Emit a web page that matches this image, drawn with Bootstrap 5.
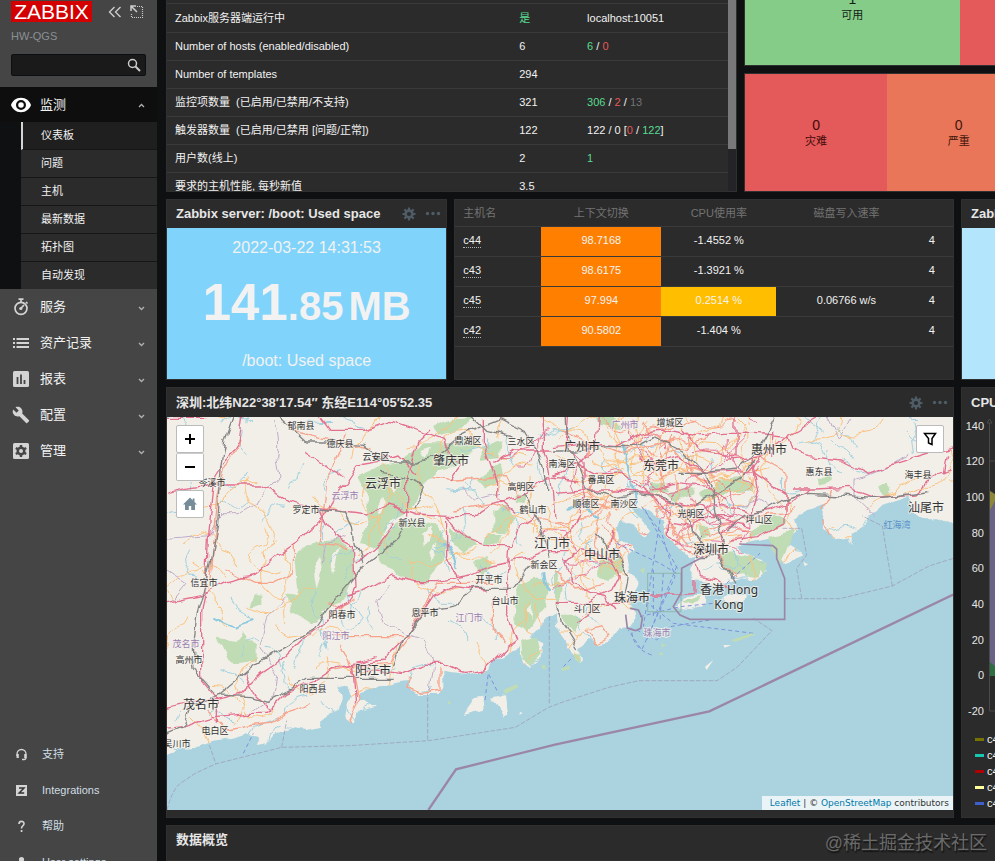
<!DOCTYPE html>
<html lang="zh-CN">
<head>
<meta charset="utf-8">
<meta name="viewport" content="width=device-width, initial-scale=1">
<title>Zabbix 仪表板</title>
<link href="https://cdn.jsdelivr.net/npm/bootstrap@5.3.0/dist/css/bootstrap.min.css" rel="stylesheet">
<style>
:root{--page:#0e1012;--panel:#2b2b2b;--line:#3a3a3a;--side:#454545;--ok:#59db8f;--bad:#e45959}
body{background:var(--page);color:#f2f2f2;font:11px/14px "Liberation Sans","Noto Sans CJK SC",sans-serif;height:100vh;overflow:hidden}
.sidebar{width:157px;background:var(--side)}
.brand-row{padding:1px 0 0 11px}
.brand-logo{background:#d40000;color:#fff;font:21px/21px "Liberation Sans",sans-serif;padding:0 1px;text-decoration:none;width:81px;height:21px;text-align:center}
.icon-btn{background:none;border:0;padding:0;line-height:0;color:#ccc}
.server-name{color:#8a9195;padding-left:11px;margin-top:7px}
.search-box{height:22px;margin:11px 11px;background:#1a1a1a;border:1px solid #0b0f12;border-radius:2px}
.search-box input{background:none;border:0;outline:0;color:#f2f2f2;min-width:0}
.menu-link{display:flex;align-items:center;height:36px;padding:0 10px 0 12px;color:#f2f2f2;text-decoration:none;font-size:13px;gap:10px}
.menu-link .glyph{width:18px;height:18px;color:#d4d4d4}
.menu-link .chev{width:11px;height:7px;margin-left:auto;color:#b0b0b0}
.menu-link.open{background:#0e0e0e;height:35px;padding-left:11px;gap:9px}
.menu-link.open .glyph{width:20px;height:20px}
.submenu{background:var(--page);padding-left:21px}
.submenu a{display:block;height:28px;line-height:27px;padding-left:20px;background:var(--panel);border-bottom:1px solid #141618;color:#f2f2f2;text-decoration:none}
.submenu a.current{background:#1f1f1f;border-left:2px solid #d4d4d4;padding-left:18px}
.submenu a:last-child{height:27px;border-bottom:0}
.foot-menu{margin-bottom:-19px}
.foot-menu a{display:flex;align-items:center;height:36px;padding-left:15px;gap:14px;color:#cfdde4;text-decoration:none}
.foot-menu svg{width:13px;height:13px;color:#d4d4d4}
.board{padding-left:9px;gap:7px}
.band{gap:7px}
.panel{background:var(--panel);border:1px solid #303030;min-width:0;overflow:hidden}
.cut{border-right:0}
.band-a{height:192px}.band-b{height:181px}.band-c{height:431px}
.side-tiles{gap:7px;flex:251 1 0;min-width:0;overflow:hidden}
.side-tiles .panel{height:119px;flex:none}
.w571{flex:568 1 0}.w282{flex:280 1 0}.w499{flex:499 1 0}.w34{flex:0 0 34px}
.panel-head{height:28px;padding:0 5px 0 9px;flex:none}
.band-c .panel-head{height:29px}
.panel-head h4{font-size:13px;line-height:16px;font-weight:700;color:#e6e6e6;margin:0;white-space:nowrap}
.panel-head svg{width:16px;height:16px;color:#4f5c66}
.grid-table{width:100%;border-collapse:collapse;table-layout:fixed}
.grid-table td{height:28px;padding:0 0 0 8px;border-bottom:1px solid var(--line);white-space:nowrap}
.top-rule{height:4px;border-bottom:1px solid var(--line)}
.hosts td{height:30px;text-align:center;padding:0 0 2px}
.hosts th{height:26px;padding:0;text-align:center;font-weight:400;color:#737373;border-bottom:1px solid var(--line)}
.hosts td:first-child,.hosts th:first-child{text-align:left;padding-left:8px}
.hosts td:last-child{padding-right:6px}
.hosts a{color:#f2f2f2;text-decoration:none;border-bottom:1px dotted #b0b0b0;padding-bottom:1px}
.hot{background:#ff8000}.warm{background:#ffbf00}
.rail{width:8px;background:#242428}.thumb{height:149px;background:#78787a}
.ok{color:var(--ok)}.bad{color:var(--bad)}.dim{color:#737373}
.tile{font-size:11px;line-height:16px}
.tile b{font-size:14px;font-weight:400}
.t-green{background:#86cc89;color:#121f13;flex:0 0 86%}
.t-red{background:#e45959;color:#400a0a}.t-orange{background:#e97659;color:#44150a}
.w57{flex:0 0 57%}
.item-tile{background:#80d4fb;color:#f2f2f2;padding:10px 0 8px}
.item-tile p{font-size:16px;line-height:20px;margin:0}
.big-num{font-weight:700;font-size:40px;line-height:56px;white-space:nowrap}
.big-num span{font-size:51px}
.big-num small{font-size:40px;font-weight:700;margin-left:5px}
.map-area{flex:none;height:393px;background:#aad3df}
.map-area>svg{width:100%;height:100%}
.map-tools{left:9px;top:8px;gap:9px}
.map-btn{width:28px;height:28px;background:#fff;border:1px solid #bbb;padding:0;color:#000;display:flex;align-items:center;justify-content:center;border-radius:2px}
.map-btn+.map-btn{border-top-color:#ccc}
.map-filter{right:9px;top:8px}
.credit{right:0;bottom:0;background:rgba(255,255,255,.75);color:#333;padding:0 4px 0 8px;font:9px/14px "DejaVu Sans",sans-serif}
.credit a{color:#0078a8;text-decoration:none}
.lb{font-family:"Noto Sans","Noto Sans CJK SC",sans-serif;text-anchor:middle;dominant-baseline:central;fill:#333;font-size:9px;stroke:#f6f3ee;stroke-width:2px;paint-order:stroke;stroke-opacity:.7}
.lb .city{font-size:12px}.lb .area{fill:#9b7fb0}.lb .bay{fill:#5a8fc8;stroke:none}
.legend{list-style:none;margin:0;padding:2px 0 0 13px}
.legend li{height:16px;display:flex;align-items:center;gap:3px;white-space:nowrap}
.legend i{width:9px;height:3px;flex:none}
.s1{background:#777300}.s2{background:#17c7b0}.s3{background:#b00000}.s4{background:#ffff99}.s5{background:#3e60cc}
.watermark{right:8px;bottom:6px;font-size:18px;line-height:24px;color:#6a6a6a;text-shadow:1px 2px 1px #151515}
</style>
<script src="https://cdn.jsdelivr.net/npm/bootstrap@5.3.0/dist/js/bootstrap.bundle.min.js"></script>
</head>
<body class="d-flex">
<svg class="d-none" aria-hidden="true">
  <symbol id="gear" viewBox="0 0 16 16"><circle cx="8" cy="8" r="3.400" fill="none" stroke="currentColor" stroke-width="2.600"/><path d="M8 1.500v3M8 11.500v3M1.500 8h3M11.500 8h3M3.400 3.400l2.100 2.100M10.500 10.500l2.100 2.100M12.600 3.400l-2.100 2.100M5.500 10.500l-2.100 2.100" stroke="currentColor" stroke-width="2.200"/></symbol>
  <symbol id="dots" viewBox="0 0 16 16"><g fill="currentColor"><circle cx="2.500" cy="7.500" r="1.700"/><circle cx="8" cy="7.500" r="1.700"/><circle cx="13.500" cy="7.500" r="1.700"/></g></symbol>
  <symbol id="down" viewBox="0 0 11 7"><path d="M3 3l2.500 2.500L8 3" fill="none" stroke="currentColor" stroke-width="1.300"/></symbol>
</svg>

<aside class="sidebar d-flex flex-column flex-shrink-0 vh-100 overflow-hidden">
  <header class="brand-row d-flex align-items-center">
    <a class="brand-logo" href="#">ZABBIX</a>
    <button class="icon-btn ms-3" aria-label="收起"><svg width="14" height="14" viewBox="0 0 14 14"><path d="M6.500 2L1.500 7l5 5M12.500 2l-5 5 5 5" fill="none" stroke="currentColor" stroke-width="1.400"/></svg></button>
    <button class="icon-btn ms-2" aria-label="全屏"><svg width="14" height="14" viewBox="0 0 14 14"><path d="M7 1.500h5.500v11h-11V8" fill="none" stroke="currentColor" stroke-width="1.200" stroke-dasharray="1 1"/><path d="M1 6V1h5M1.500 1.500L7 7" fill="none" stroke="currentColor" stroke-width="1.500"/></svg></button>
  </header>
  <div class="server-name">HW-QGS</div>
  <form class="search-box d-flex align-items-center pe-1" role="search">
    <input class="flex-grow-1" type="text" aria-label="搜索">
    <button class="icon-btn" type="button" aria-label="搜索"><svg width="14" height="14" viewBox="0 0 14 14"><circle cx="5.500" cy="5.500" r="4" fill="none" stroke="currentColor" stroke-width="1.500"/><path d="M8.500 8.500L13 13" stroke="currentColor" stroke-width="2"/></svg></button>
  </form>
  <nav>
    <a class="menu-link open" href="#"><svg class="glyph text-white" viewBox="0 0 18 18"><path fill="currentColor" fill-rule="evenodd" d="M9 2.500C4.500 2.500 1.200 5.400 0 9c1.200 3.600 4.500 6.500 9 6.500s7.800-2.900 9-6.500c-1.200-3.600-4.500-6.500-9-6.500zm0 11a4.500 4.500 0 1 1 0-9 4.500 4.500 0 0 1 0 9zM9 6.500a2.500 2.500 0 1 0 0 5 2.500 2.500 0 0 0 0-5z"/></svg>监测<svg class="chev" viewBox="0 0 11 7"><path d="M3 6l2.500-2.500L8 6" fill="none" stroke="currentColor" stroke-width="1.300"/></svg></a>
    <div class="submenu">
      <a class="current" href="#">仪表板</a><a href="#">问题</a><a href="#">主机</a><a href="#">最新数据</a><a href="#">拓扑图</a><a href="#">自动发现</a>
    </div>
    <a class="menu-link" href="#"><svg class="glyph" viewBox="0 0 18 18"><circle cx="9" cy="10.300" r="6" fill="none" stroke="currentColor" stroke-width="1.700"/><path d="M6.500 1.200h5M9 1v3M14 4l1.500 1.500M9 10.300L12 7" stroke="currentColor" stroke-width="1.700"/><circle cx="8.800" cy="10.500" r="1.600" fill="currentColor"/></svg>服务<svg class="chev"><use href="#down"/></svg></a>
    <a class="menu-link" href="#"><svg class="glyph" viewBox="0 0 18 18"><path d="M1 5h2M4.500 5H17M1 9h2M4.500 9H17M1 13h2M4.500 13H17" stroke="currentColor" stroke-width="1.800"/></svg>资产记录<svg class="chev"><use href="#down"/></svg></a>
    <a class="menu-link" href="#"><svg class="glyph" viewBox="0 0 18 18"><rect x="1" y="1" width="16" height="16" rx="1.500" fill="currentColor"/><path d="M5.500 7v7M9 4.500V14M12.500 10v4" stroke="#454545" stroke-width="1.800"/></svg>报表<svg class="chev"><use href="#down"/></svg></a>
    <a class="menu-link" href="#"><svg class="glyph" viewBox="0 0 24 24"><path fill="currentColor" d="M22.700 19l-9.100-9.100c.9-2.300.4-5-1.500-6.900-2-2-5-2.400-7.400-1.300L9 6 6 9 1.600 4.700C.4 7.100.9 10.100 2.900 12.100c1.900 1.900 4.600 2.400 6.900 1.500l9.100 9.100c.4.400 1 .4 1.400 0l2.300-2.300c.5-.4.500-1.100.1-1.400z"/></svg>配置<svg class="chev"><use href="#down"/></svg></a>
    <a class="menu-link" href="#"><svg class="glyph" viewBox="0 0 18 18"><rect x="1" y="1" width="16" height="16" rx="1.500" fill="currentColor"/><circle cx="9" cy="9" r="3.200" fill="none" stroke="#454545" stroke-width="2.600"/><path d="M9 3v12M3.800 6l10.400 6M14.200 6L3.800 12" stroke="#454545" stroke-width="2.400"/><circle cx="9" cy="9" r="2" fill="#d4d4d4"/></svg>管理<svg class="chev"><use href="#down"/></svg></a>
  </nav>
  <nav class="foot-menu mt-auto">
    <a href="#"><svg viewBox="0 0 13 13"><path d="M2 8V6a4.500 4.500 0 0 1 9 0v3.500a2 2 0 0 1-2 2H7" fill="none" stroke="currentColor" stroke-width="1.300"/><path d="M1.500 6h2.300v4H1.500zM9.200 6h2.300v4H9.200z" fill="currentColor"/></svg>支持</a>
    <a href="#"><svg viewBox="0 0 13 13"><path fill="currentColor" d="M1 1h11v11H1z"/><path d="M4 4h5L4.200 9H9.200" fill="none" stroke="#333" stroke-width="1.500"/></svg>Integrations</a>
    <a href="#"><svg viewBox="0 0 13 13"><path d="M4 4c0-3.500 5-3.300 5-.3C9 5.700 6.500 6 6.500 8.500" fill="none" stroke="currentColor" stroke-width="1.600"/><path d="M5.700 10h1.700v2H5.700z" fill="currentColor"/></svg>帮助</a>
    <a href="#"><svg viewBox="0 0 13 13"><circle cx="6.500" cy="3.500" r="2.600" fill="currentColor"/><path d="M1.500 12c0-6 10-6 10 0z" fill="currentColor"/></svg>User settings</a>
  </nav>
</aside>

<main class="board d-flex flex-column flex-grow-1 vh-100 overflow-hidden position-relative">
  <section class="band band-a d-flex flex-shrink-0">
    <div class="panel w571 border-top-0 d-flex">
      <div class="flex-grow-1">
        <div class="top-rule"></div>
        <table class="grid-table">
          <colgroup><col style="width:61.400%"><col style="width:12.100%"><col></colgroup>
          <tbody>
          <tr><td>Zabbix服务器端运行中</td><td class="ok">是</td><td>localhost:10051</td></tr>
          <tr><td>Number of hosts (enabled/disabled)</td><td>6</td><td><span class="ok">6</span> / <span class="bad">0</span></td></tr>
          <tr><td>Number of templates</td><td>294</td><td></td></tr>
          <tr><td>监控项数量&nbsp; (已启用/已禁用/不支持)</td><td>321</td><td><span class="ok">306</span> / <span class="bad">2</span> / <span class="dim">13</span></td></tr>
          <tr><td>触发器数量&nbsp; (已启用/已禁用 [问题/正常])</td><td>122</td><td>122 / 0 [<span class="bad">0</span> / <span class="ok">122</span>]</td></tr>
          <tr><td>用户数(线上)</td><td>2</td><td class="ok">1</td></tr>
          <tr><td>要求的主机性能, 每秒新值</td><td>3.5</td><td></td></tr>
          </tbody>
        </table>
      </div>
      <div class="rail flex-shrink-0"><div class="thumb"></div></div>
    </div>
    <div class="side-tiles d-flex flex-column justify-content-end">
      <div class="panel cut d-flex">
        <div class="tile t-green d-flex flex-column align-items-center justify-content-center"><b>1</b>可用</div>
        <div class="tile t-red flex-grow-1"></div>
      </div>
      <div class="panel cut d-flex">
        <div class="tile t-red w57 d-flex flex-column align-items-center justify-content-center"><b>0</b>灾难</div>
        <div class="tile t-orange w57 d-flex flex-column align-items-center justify-content-center"><b>0</b>严重</div>
      </div>
    </div>
  </section>

  <section class="band band-b d-flex flex-shrink-0">
    <div class="panel w282 d-flex flex-column">
      <div class="panel-head d-flex align-items-center"><h4 class="me-auto">Zabbix server: /boot: Used space</h4>
        <button class="icon-btn me-2" aria-label="编辑"><svg><use href="#gear"/></svg></button><button class="icon-btn" aria-label="更多"><svg><use href="#dots"/></svg></button></div>
      <div class="item-tile flex-grow-1 d-flex flex-column justify-content-between text-center">
        <p>2022-03-22 14:31:53</p>
        <div class="big-num"><span>141</span>.85<small>MB</small></div>
        <p>/boot: Used space</p>
      </div>
    </div>
    <div class="panel w499">
      <table class="grid-table hosts">
        <colgroup><col style="width:17.300%"><col style="width:24.100%"><col style="width:23.100%"><col style="width:28.200%"><col></colgroup>
        <thead><tr><th>主机名</th><th>上下文切换</th><th>CPU使用率</th><th>磁盘写入速率</th><th></th></tr></thead>
        <tbody>
        <tr><td><a href="#">c44</a></td><td class="hot">98.7168</td><td>-1.4552 %</td><td></td><td>4</td></tr>
        <tr><td><a href="#">c43</a></td><td class="hot">98.6175</td><td>-1.3921 %</td><td></td><td>4</td></tr>
        <tr><td><a href="#">c45</a></td><td class="hot">97.994</td><td class="warm">0.2514 %</td><td>0.06766 w/s</td><td>4</td></tr>
        <tr><td><a href="#">c42</a></td><td class="hot">90.5802</td><td>-1.404 %</td><td></td><td>4</td></tr>
        </tbody>
      </table>
    </div>
    <div class="panel cut w34 d-flex flex-column">
      <div class="panel-head d-flex align-items-center"><h4>Zabbix server</h4></div>
      <div class="flex-grow-1" style="background:#b3e5fc"></div>
    </div>
  </section>

  <section class="band band-c d-flex flex-shrink-0">
    <div class="panel flex-grow-1 d-flex flex-column">
      <div class="panel-head d-flex align-items-center"><h4 class="me-auto">深圳:北纬N22°38′17.54″ 东经E114°05′52.35</h4>
        <button class="icon-btn me-2" aria-label="编辑"><svg><use href="#gear"/></svg></button><button class="icon-btn" aria-label="更多"><svg><use href="#dots"/></svg></button></div>
      <div class="map-area position-relative">
        <svg viewBox="0 0 786 393" preserveAspectRatio="xMidYMid slice" role="img" aria-label="广东沿海地图">
          <defs>
            <filter id="rough" x="0" y="0" width="2400" height="1220" filterUnits="userSpaceOnUse"><feTurbulence type="fractalNoise" baseFrequency=".02" numOctaves="2" seed="4"/><feDisplacementMap in="SourceGraphic" scale="30" xChannelSelector="R" yChannelSelector="G"/></filter>
            <path id="coast" d="M-40-40H2440V365L2385 350 2335 325 2285 325 2255 300 2245 260 2195 275 2165 290 2130 320 2115 350 2075 370 2075 400 2065 380 2015 385 1985 355 1990 320 1995 280 1945 300 1905 325 1915 360 1875 400 1925 420 1925 440 1875 460 1835 385 1785 395 1725 410 1745 425 1775 440 1805 450 1820 490 1785 510 1745 505 1715 515 1665 530 1635 515 1600 510 1585 470 1615 440 1585 445 1555 420 1520 370 1510 330 1485 320 1440 290 1415 290 1445 330 1470 360 1455 385 1385 325 1365 350 1375 395 1420 400 1430 420 1405 440 1415 490 1430 510 1420 545 1385 575 1400 560 1420 590 1430 620 1410 650 1375 655 1355 690 1315 700 1285 690 1260 720 1275 745 1260 760 1250 740 1225 715 1195 650 1188 610 1170 620 1140 650 1110 680 1150 700 1145 745 1110 770 1085 765 1075 715 1040 730 1000 750 990 775 960 785 920 795 880 790 850 785 850 830 830 855 780 855 750 835 745 810 690 820 640 840 600 850 600 875 655 890 600 900 580 935 560 920 575 860 560 835 525 830 545 850 545 880 530 905 490 920 480 950 440 960 400 955 345 970 320 1000 290 1005 300 985 260 975 200 990 160 995 110 1010 60 1015 21 1035-40 1060z"/>
            <clipPath id="land"><use href="#coast"/></clipPath>
          </defs>
          <rect width="786" height="393" fill="#aad3df"/>
          <g transform="scale(.33333) translate(-21 -21)">
            <g filter="url(#rough)" fill="none" stroke-linejoin="round">
              <use href="#coast" fill="#f2efe9"/>
              <g fill="#f2efe9"><path d="M1545 595l40-35 45-5 5 20-40 25zM1685 560l40-12 35 12-20 15-40-2zM905 915l35-50 30-5 5 40-30 5zM990 860l45-10 10 70-15 5-20-40z"/></g>
              <g fill="#c0dcb4">
                <path d="M405 440l60-45 70-5 45 30 5 70-40 90-80 30-60-25 10-50zM380 550l60 10 60 50-45 30-60-30zM590 200l70-30 50-10 80-60 110 0 20-15 40 20-60 60-60 15-60 60-30 60-60 30-40 80-50-10 20-60 10-70zM650 400l60-60 60-10 60 20 30 50-10 60-50 60-40-10-30-10-70-30zM870 350l60 30 20 20-40 30-40-30zM1000 300l40-15 25 40-30 45-35 0zM980 375h45l-10 30-40-5zM820 50l60-30h75l-60 40-60 20zM965 110l60-20-10 50-50 10zM950 210l70-50 10 40-50 40zM170 680l60 10 15-30 10 30 35 15v45l-50 10-35-10zM270 600l15-50 25 5v30zM1075 520l50-20 40 20-10 70-50 75-40-20zM1080 690l50-10 15 50-30 35-30-10zM940 450l40-5 10 20-30 30zM1060 250l40 5-10 25-25-5z"/>
                <path transform="translate(1185 0)" d="M430 250l60-40 60-10 45 15v30l-60 0-40 10-50 20zM340 250l70-20 10 20-60 20zM130 450l60-10 20 40-50 30-30-10zM120 20l60 5 20 30-70-10zM590 360l70-40 40 5-10 20-50 20-60 20zM640 380l80-20-20 40-20 60-30-40zM530 430l60 10 40 20-20 40-50-10-40 5-30-60zM380 580l50-20-20 30zM780 200l50 0v20l-40 10zM975 230l25-15 10 30-20 25zM280 215l50 5 20 20-70 10zM20 620l60 0-20 50-30-20zM0 470l20 60-10 60-10-20zM430 350l30 0 10 30-30 10zM60 730l25 5-10 25-15-10z"/>
              </g>
              <g fill="#f2efe9"><path d="M460 480l20-40 8 30-18 60zM520 430l18-20-8 60-18 20zM650 290l20-30 4 20-14 40zM790 370l20-20 8 20-24 40zM820 400l14-10-4 50-14 10zM700 210l24-10-10 40-12 10zM780 120l30-10-10 30zM1100 600l20-20-6 50z"/></g>
              <g clip-path="url(#land)"><g id="minor" stroke-width="3"></g></g>
              <g stroke="#8ec9de" stroke-width="6"><path d="M1385 90q20 80 45 190M1150 480q0 50 20 60M850 400q30 20 40 80M160 620l60 30 60-20M1220 300q40-20 100 20"/></g>
              <g stroke="#c0acca" stroke-width="3"><path d="M340 21q20 80 10 120l10 60-60 70-60 40-60 0-30 60-110 10-50 0M21 480l60 40-40 50M380 560l-60 60-20 90 50 90-10 60-60 40M690 520l-40 60 20 50 60 40 60 20 30 80-10 80M900 230l40 40 80-20M560 380l-60 20-10 60"/><path transform="translate(1185 0)" d="M820 21l30 60 40-50M1060 130l-60 40-100 40 0 50 60 60M550 290l60-20 30 20"/></g>
              <g stroke="#f8a48b" stroke-width="4"><path d="M240 90l-50 90-20 80-20 250M400 400l0 90-60 30-60 0-80-40M400 60l150 40 90 20M560 70l-60 150-20 180 80 10M580 560l-40 40-40-20M760 640l40-60 30-60 170 0M880 300l120-20 50 20M520 680l100 0 130 0-60 80-130 10-50 10M540 700l40 80 20 90-30 60M140 900l60 60 120-20 120-60M1000 580l0 80 40 40M750 800l-10 30 50 20 50-10 0-70M820 200l60 10 160-10 30 60"/>
                <path transform="translate(1185 0)" d="M20 60l80 40 100 30 160-40M60 160l60 60-20 60 90 20M0 340l110-20 60-70M280 250l60 80 60 80 60 10M440 370l80-30 80-20 100-10 20-20M260 40l80 60 60 70 80 30M600 130l90 50 0 120M100 660l20 40 40-20-20-30zM0 480l60 60 90-20M480 410l30 60 30 30M800 330l20 50M830 240l-30 60"/></g>
              <g stroke="#e4708f" stroke-width="4"><path d="M21 25l120 0M245 21l-10 70-70 110-20 180-5 130-15 100 0 200 50 60 0 70M21 250l50-15 100-10 140 0 70 50 90 20 150 20 60-30 90 30 110 5 60 0 60-40 100-30 60-50 100 10M21 575l100-20 80-40 80-20 70-60 60-40 90-90 20-50 30-30 40-60 60-10 60-20 60 60M430 120l90 60 30 20M480 21l30 40 100 0 80-30 60 20 100 40 50 80-30 40M740 320l0-120 30-100 40-40M480 300l40 80 60 30 5 120-20 40-60 60-80 60-60 60-60 40-60 60-80 20-100 10-80 20M560 555l60-20 70-40 80 20 60 0 100-20 60-30 110-20 60-20 60 0M700 340l-40 60-70 60M860 330l0 110 40 80M860 320l60 60 80 30 60 0 20-60 60-40M980 540l-100-10-60 30-40 60-50 70-60 60-140 20-60 40-90 40-60 60-60 0-90 10-100 30-100 10-80-5M1050 410l-10 100 0 100 30 80-40 30-60 60-60 10-60-30-60 0-60 30-120-10M650 740l-70 20 10 120M970 21l0 80 20 60 20 60 0 40 60 50M1000 160l60-40 120 0M1150 21l0 110 20 50 15 140M260 790l20 60 50 50"/>
                <path transform="translate(1185 0)" d="M0 110l80-10 100 10 80-40 60-10 100 20 80-10 100 0 100 10 10 40 50 20 100 10 80 40 80-30 130-40 50-10M0 200l60-40 60 30 80 0 80 60 60 20 100 20 60 40 80 20M40 21l-10 80 60 60 0 100-30 80-50 50M130 21l-10 100-60 60M0 250l120-10 70 0 90 10 60 60 0 60 60 60M250 150l60 10 60-20 80 50 130-5 60-70M590 140l20 110-20 60-80 50-20 90M790 21l-100 60-80 60-100 10M440 200l60 80 90 30 60-10 60-30 60-30M600 190l90 60 0 90-80 40-80 10M720 240l60 0 100-5 80 30 120-10 60-60 50-20M0 580h80l90-40 20-40-30-60 10-80M150 440l-80-20-40 40 20 60 100 40 30 40M420 450l10 50 60 10 40 30M1175 130l-10 60M380 60l60 60 100 20 0-120M650 60l0 80M60 640l80-60 60 0 90-25h80l50-5 0-40M290 240l70-20 100 10 60 40M350 340l60 10 50-30 90 0"/></g>
              <g stroke="#858585" stroke-width="4"><path d="M21 970l50-20 20-60 90-35 90 5 50 15 80-40 40-30 100 0 160 0M220 21l-25 70-15 90-10 160-20 120-20 80-20 80-10 90 5 70 60 70M700 770l30-80 60-80 90-20 70-55 110 0 50-70M170 860l120-100 100-60 70-40 40-60 60-70 50-60 100-80 30-60M360 21l80 75 60 0 110 10 60 50 100 0 60-20 60-50 80-40 50-20 80 40 40 70 20 90 0 20M480 300l80 10 20 40 10 60 20 50M940 21l40 40 80 20M660 190l60 10 70 30-30 70M1090 250l50 90 30 100"/>
                <path transform="translate(1185 0)" d="M0 120l60 0 100-10 80 0 60-30 80 40 60 60 30 50 10 80 30 80-20 40-30-10-50-60-20-70-60-30-90-10-60 10-80-20-30-80-30-50-10-140M370 190l80 0 90-10 60-50 60-110M420 290l60-40 80-50 40-50M520 360l50-40 60-20 50-30 80-20 100 5 120 10 80-10 60-10M440 380l-10 60 60 0 50 80M120 380l70 60 30 60-10 50M0 580l20 60 50 80"/></g>
            </g>
            <g fill="none" stroke="#9a94b4" stroke-width="2" stroke-dasharray="14 5"><path d="M21 1200q15-60 40-80l45-30 60-28 200-50 200-5 240-15 260-40 100-60 40-15 140-45 90-20h235l60-40 105-110-60-40M148 1005l20 57M365 1012l15-80M803 990V850M1168 880V620M1875 566l165 0 157-38 110-60 80-25M2197 528l-30-180-60-30M1925 565l-15-90 30-40-15-80-60 0"/></g>
            <g fill="none" stroke="#7d91dd" stroke-width="3" stroke-dasharray="12 9"><path d="M1445 290l60 80 40 130-100 220-40-60M1455 300l100 180M1500 330l-50 320M1550 470l-90 220M1370 400l130 60 50 30M1440 560l100 80 240 30M1440 620l120-30 100-10M1430 660l60 30 40-40 120-20M1475 735q-60-20-60-80M1700 520l100-90M250 1030l30-60M975 870l10-80 30 60M1210 770l30-30M1480 480v140M1510 490l-10 140"/></g>
            <path d="M1463 490h100v115h-100z" fill="none" stroke="#8fb8ae" stroke-width="3"/>
            <g fill="#c0dcb4"><path d="M1030 840l40-18 5 10-40 20zM1715 690l60-20 10 4-60 22zM1495 735l15 0-6-10zM865 870l8 12-10 0zM1145 765l12 0 0 12-10 0zM1205 775l25-8 0 10-25 6zM1440 480l15-8-5 20zM1790 455l30 10-10 30zM1505 700l14 6-14 6z"/><path d="M1635 770l25-20-20 30zM1080 905l8 5-10 4zM1930 455l14 8-10 6zM1690 705l24 0-20 8z" fill="#f2efe9"/></g>
            <g fill="none" stroke="#9b86a8"><path stroke-width="5" d="M1630 440l-65 35 0 70-25 45 20 25 30 13h284V505l-24-60v-28l-12-10-100-5M1410 595l25 5 12 25-5 30-15 7-25-8-5-40"/><path stroke-width="7" d="M805 1200l83-122 297-74 463-100 732-350"/></g>
          </g>
          <g class="lb">
            <text x="134" y="8">郁南县</text><text x="173" y="26">德庆县</text><text x="209" y="39">云安区</text><text x="301" y="23">鼎湖区</text><text x="354" y="24">三水区</text><text x="354" y="69">高明区</text><text x="45" y="65">岑溪市</text><text x="139" y="92">罗定市</text><text x="366" y="92">鹤山市</text><text x="245" y="105">新兴县</text><text x="377" y="147">新会区</text><text x="37" y="165">信宜市</text><text x="322" y="162">开平市</text><text x="338" y="183">台山市</text><text x="175" y="197">阳春市</text><text x="258" y="195">恩平市</text><text x="22" y="242">高州市</text><text x="146" y="271">阳西县</text><text x="48" y="313">电白区</text><text x="10" y="326">吴川市</text><text x="503" y="5">增城区</text><text x="395" y="46">南海区</text><text x="434" y="62">番禺区</text><text x="652" y="54">惠东县</text><text x="751" y="57">海丰县</text><text x="419" y="86">顺德区</text><text x="457" y="86">南沙区</text><text x="524" y="96">光明区</text><text x="592" y="102">坪山区</text><text x="420" y="191">斗门区</text>
            <text class="area" x="178" y="78">云浮市</text><text class="area" x="302" y="200">江门市</text><text class="area" x="169" y="218">阳江市</text><text class="area" x="19" y="226">茂名市</text><text class="area" x="458" y="7">广州市</text><text class="area" x="490" y="215">珠海市</text><text class="bay" x="730" y="107">红海湾</text>
            <text class="city" x="284" y="43">肇庆市</text><text class="city" x="216" y="66">云浮市</text><text class="city" x="385" y="126">江门市</text><text class="city" x="206" y="253">阳江市</text><text class="city" x="34" y="287">茂名市</text><text class="city" x="415" y="29">广州市</text><text class="city" x="602" y="32">惠州市</text><text class="city" x="494" y="48">东莞市</text><text class="city" x="759" y="90">汕尾市</text><text class="city" x="544" y="132">深圳市</text><text class="city" x="435" y="137">中山市</text><text class="city" x="562" y="172">香港 Hong<tspan x="562" dy="15">Kong</tspan></text><text class="city" x="465" y="180">珠海市</text>
          </g>
        </svg>
        <div class="map-tools position-absolute d-flex flex-column">
          <div><button class="map-btn" aria-label="放大"><svg width="12" height="12" viewBox="0 0 12 12"><path d="M6 1v10M1 6h10" stroke="#000" stroke-width="2"/></svg></button><button class="map-btn" aria-label="缩小"><svg width="12" height="12" viewBox="0 0 12 12"><path d="M1 6h10" stroke="#000" stroke-width="2"/></svg></button></div>
          <button class="map-btn" aria-label="主视图"><svg width="16" height="16" viewBox="0 0 16 16"><path fill="#768d99" d="M8 1.500L1 8.500h2V14h3.800v-4h2.400v4H13V8.500h2L12.500 6V2.500h-1.800v1.700z"/></svg></button>
        </div>
        <button class="map-btn map-filter position-absolute" aria-label="筛选"><svg width="14" height="14" viewBox="0 0 14 14"><path d="M1.500 1.500h11L9 6.500v6L5.500 11V6.500z" fill="none" stroke="#000" stroke-width="1.500"/></svg></button>
        <div class="credit position-absolute"><a href="#">Leaflet</a> | © <a href="#">OpenStreetMap</a> contributors</div>
      </div>
    </div>
    <div class="panel cut w34 d-flex flex-column">
      <div class="panel-head d-flex align-items-center"><h4 class="ms-0">CPU使用率</h4></div>
      <svg class="flex-shrink-0" width="34" height="312" viewBox="0 0 34 312">
        <g fill="#e6e6e6" font-size="11" text-anchor="end"><text x="22" y="13">140</text><text x="22" y="48">120</text><text x="22" y="84">100</text><text x="22" y="120">80</text><text x="22" y="155">60</text><text x="22" y="191">40</text><text x="22" y="227">20</text><text x="22" y="262">0</text><text x="22" y="298">-20</text></g>
        <path d="M27.500 6v288H34M25 6h5l-2.500-4zM28 44h6" fill="none" stroke="#4a4a4a"/>
        <path d="M28 74l6 4v181h-6z" fill="#6a6385"/><path d="M28 74l6 4v4l-6 11z" fill="#8d8838"/><path d="M28 245l6 5v9h-6z" fill="#2f6e42"/>
      </svg>
      <ul class="legend"><li><i class="s1"></i>c44</li><li><i class="s2"></i>c43</li><li><i class="s3"></i>c45</li><li><i class="s4"></i>c42</li><li><i class="s5"></i>c41</li></ul>
    </div>
  </section>

  <section class="panel cut flex-grow-1">
    <div class="panel-head d-flex align-items-center"><h4>数据概览</h4></div>
  </section>
  <div class="watermark position-absolute">@稀土掘金技术社区</div>
</main>
<script>
// Minor roads and streams: seeded random walks, denser around the river delta.
(function(){
  let s=7;const r=()=>(s=(s*16807)%2147483647)/2147483647;
  let out='';
  const walk=(x,y,n,len,c)=>{let a=r()*6.28,d='M'+x.toFixed(0)+' '+y.toFixed(0);
    for(let i=0;i<n;i++){a+=(r()-.5)*1.5;x+=Math.cos(a)*len;y+=Math.sin(a)*len;d+='L'+x.toFixed(0)+' '+y.toFixed(0);}
    out+='<path stroke="'+c+'" d="'+d+'"/>';};
  for(let i=0;i<190;i++)walk(r()*2380,r()*1020,6,16,'#a0d0de');
  for(let i=0;i<100;i++)walk(r()*2380,r()*1020,9,26,'#fbc27e');
  for(let i=0;i<110;i++)walk(1120+r()*700,20+r()*460,7,24,['#fbc27e','#f99b80','#e9799a','#fbc27e'][i%4]);
  document.getElementById('minor').innerHTML=out;
})();
</script>
</body>
</html>
